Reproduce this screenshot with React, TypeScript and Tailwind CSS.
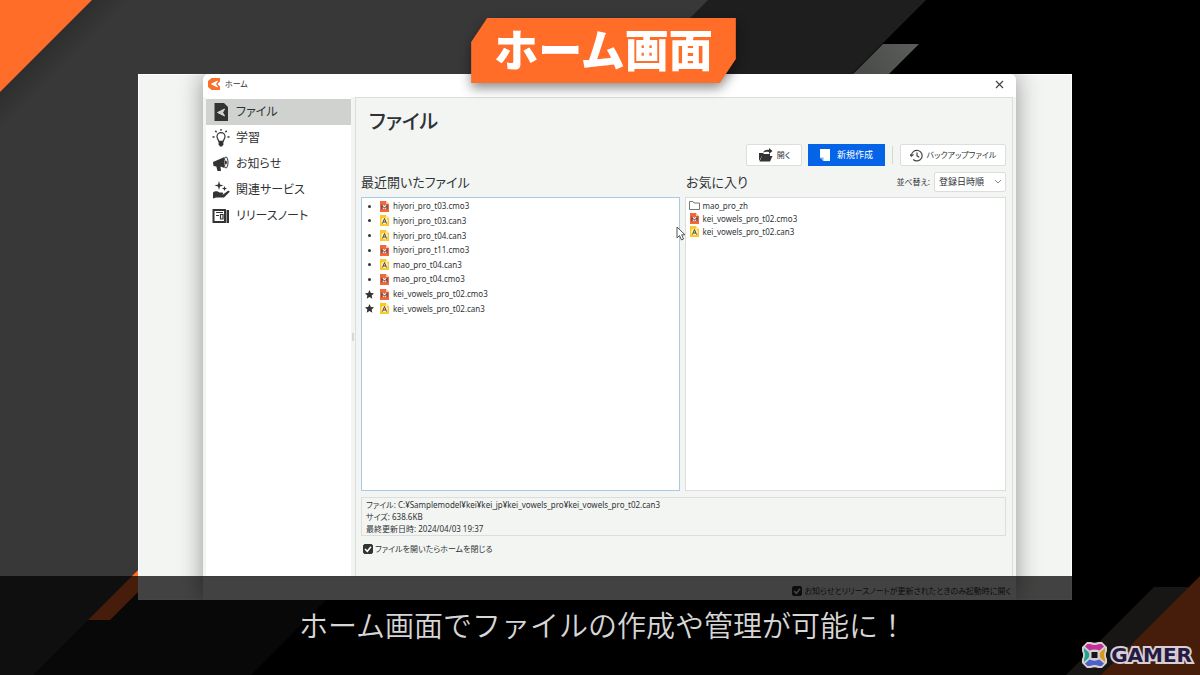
import { useState } from "react"
import type { ReactNode } from "react"

type FileKind = "cmo3" | "can3" | "folder"

type FileItem = {
    name: string
    kind: FileKind
    starred?: boolean
}

const recentFiles: FileItem[] = [
    { name: "hiyori_pro_t03.cmo3", kind: "cmo3" },
    { name: "hiyori_pro_t03.can3", kind: "can3" },
    { name: "hiyori_pro_t04.can3", kind: "can3" },
    { name: "hiyori_pro_t11.cmo3", kind: "cmo3" },
    { name: "mao_pro_t04.can3", kind: "can3" },
    { name: "mao_pro_t04.cmo3", kind: "cmo3" },
    { name: "kei_vowels_pro_t02.cmo3", kind: "cmo3", starred: true },
    { name: "kei_vowels_pro_t02.can3", kind: "can3", starred: true },
]

const favorites: FileItem[] = [
    { name: "mao_pro_zh", kind: "folder" },
    { name: "kei_vowels_pro_t02.cmo3", kind: "cmo3" },
    { name: "kei_vowels_pro_t02.can3", kind: "can3" },
]

const menu: { label: string; icon: ReactNode }[] = [
    {
        label: "ファイル",
        icon: (
            <>
                <path d="M2.500 0h9.500l4 4v14H2.500z" fill="#333" />
                <path d="M12.500 6 5.500 9.500l7 3.500-1.800-3.500z" fill="#d0d2d0" stroke="#d0d2d0" />
            </>
        ),
    },
    {
        label: "学習",
        icon: (
            <>
                <path
                    d="M6.800 12.300C6.500 10.600 5 9.800 5 7.600a4 4 0 0 1 8 0c0 2.200-1.500 3-1.800 4.700z"
                    fill="none"
                    stroke="#333"
                    strokeWidth="1.200"
                />
                <path d="M6.600 13h4.800v2.500L10 17.500H8L6.600 15.500z" fill="#333" />
                <path
                    d="M9 0v1.800M3.300 1.700l1.300 1.500M14.700 1.700l-1.300 1.500M.5 8h2M15.500 8h2"
                    stroke="#333"
                    strokeWidth="1.400"
                />
            </>
        ),
    },
    {
        label: "お知らせ",
        icon: (
            <>
                <path d="M1 7 12.500 2v11L8.500 11.500 9 16H5.500L4.300 11.500 1.500 11z" fill="#333" />
                <ellipse cx="14" cy="7.500" rx="2" ry="5.500" fill="#eee" stroke="#333" />
                <path d="M13 5.500a2 2 0 0 1 0 4z" fill="#333" />
            </>
        ),
    },
    {
        label: "関連サービス",
        icon: (
            <>
                <path
                    d="M7 0l1 3.500L11.500 4.500 8 5.500 7 9 6 5.500 2.500 4.500 6 3.500zM12.500 5l.7 1.800 1.800.7-1.800.7-.7 1.800-.7-1.800L10 7.500l1.800-.7z"
                    fill="#333"
                />
                <path
                    d="M1 11.500c3-2 4.500-1 6.500 0h3c1.500.8.500 2-.7 2h-2.500 3.700L16 9.800c1.800-.6 2 1 1 1.800L12 16.500H4L1 17.500z"
                    fill="#333"
                />
            </>
        ),
    },
    {
        label: "リリースノート",
        icon: (
            <>
                <path d="M1.500 3h11.500v12H1.500z" fill="none" stroke="#333" strokeWidth="2" />
                <path d="M4 5.500h7M4 8.500h3M8.500 7.500H11V12H8.500z" fill="none" stroke="#333" strokeWidth="1.200" />
                <path d="M14.500 3H17v13h-2.500z" fill="#333" />
            </>
        ),
    },
]

function Background() {
    return (
        <svg
            className="absolute inset-0 h-full w-full"
            viewBox="0 0 1200 675"
            preserveAspectRatio="xMidYMid slice"
            aria-hidden="true"
        >
            <defs>
                <linearGradient id="fold" gradientUnits="userSpaceOnUse" x1="46" y1="46" x2="66" y2="66">
                    <stop offset="0" stopColor="#2e2e2e" />
                    <stop offset="1" stopColor="#383838" />
                </linearGradient>
                <linearGradient id="steel" gradientUnits="userSpaceOnUse" x1="865" y1="73" x2="910" y2="44">
                    <stop offset="0" stopColor="#4a4c49" />
                    <stop offset="1" stopColor="#5a5c59" />
                </linearGradient>
            </defs>
            <path d="M0 0h1200v675H0z" fill="#000" />
            <path d="M0 0h926L251 675H0z" fill="#1e1e1e" />
            <path d="M0 0h708L33 675H0z" fill="url(#fold)" />
            <path d="M0 0h92L0 92z" fill="#ff6d29" />
            <path d="M883 44h36L819 144h-36z" fill="url(#steel)" />
            <path d="M208 500h22L110 620H88z" fill="#ff6d29" />
            <path d="M1154 587h46v88h-134z" fill="#565350" />
            <path d="M1200 576v99h-99z" fill="#ff6d29" />
        </svg>
    )
}

function FileIcon({ kind }: { kind: FileKind }) {
    if (kind === "folder") {
        return (
            <svg className="h-[11px] w-[11px] shrink-0" viewBox="0 0 11 11">
                <path d="M.5 9.500v-8H4l1 1.500h5.500v6.500z" fill="#fff" stroke="#777" />
            </svg>
        )
    }
    const isModel = kind === "cmo3"
    return (
        <svg className="h-[11px] w-[11px] shrink-0" viewBox="0 0 11 11">
            <path d="M1 0h6l3 3v8H1z" fill={isModel ? "#f2683c" : "#fbc926"} />
            <path d="M7 0l3 3H7z" fill="#fff" opacity=".6" />
            {isModel ? (
                <>
                    <path d="M3.500 3.500 5.500 5l2-1.500v5l-2-1.500-2 1.500z" fill="#fff" />
                    <path d="M3 3.500v5M8 3.500v5" stroke="#4a3b38" />
                    <path d="M3 5.500l2.500 1L8 5.500" fill="none" stroke="#4a3b38" />
                </>
            ) : (
                <>
                    <circle cx="5.500" cy="6" r="3.300" fill="#fff" opacity=".7" />
                    <path d="M3.500 8.500l2-5 2 5M4.300 7h2.400" fill="none" stroke="#4a4436" />
                </>
            )}
        </svg>
    )
}

function FileName({ item }: { item: FileItem }) {
    return (
        <button type="button" className="flex items-center gap-[3px] whitespace-nowrap">
            <FileIcon kind={item.kind} />
            {item.name}
        </button>
    )
}

function Check({ label }: { label: string }) {
    const [on, setOn] = useState(true)
    return (
        <label className="flex items-center gap-[2px] whitespace-nowrap text-[8px] leading-3">
            <span className="relative h-[10px] w-[10px]">
                <input
                    type="checkbox"
                    checked={on}
                    onChange={(e) => setOn(e.target.checked)}
                    className="block h-[10px] w-[10px] appearance-none rounded-[2px] border border-[#333] bg-white checked:bg-[#333]"
                />
                {on && (
                    <svg className="pointer-events-none absolute inset-0" viewBox="0 0 10 10">
                        <path d="M2 5l2.300 2.300L8 2.800" fill="none" stroke="#fff" strokeWidth="1.500" />
                    </svg>
                )}
            </span>
            {label}
        </label>
    )
}

function Sidebar() {
    const [active, setActive] = useState(0)
    return (
        <nav className="w-[145px] shrink-0 bg-white pt-[2px]">
            {menu.map((item, i) => (
                <button
                    key={item.label}
                    type="button"
                    onClick={() => setActive(i)}
                    className={`flex h-[26px] w-full items-center gap-[6px] pl-[6px] text-[12px] ${
                        i === active ? "bg-[#d0d2d0]" : ""
                    }`}
                >
                    <svg className="h-[18px] w-[18px]" viewBox="0 0 18 18">
                        {item.icon}
                    </svg>
                    {item.label}
                </button>
            ))}
        </nav>
    )
}

function Toolbar() {
    return (
        <div className="mt-[6px] flex h-[22px] items-stretch justify-end">
            <button
                type="button"
                className="flex w-14 items-center justify-center gap-1 rounded-[2px] border border-[#dcdedc] bg-white text-[8px]"
            >
                <svg className="h-[14px] w-[15px]" viewBox="0 0 15 14">
                    <path d="M1 13V5h4l1 1h6v2H4z" fill="#333" />
                    <path d="M4 8h10.500L12 13.500H1.500z" fill="#333" />
                    <path d="M5 4.500C6.500 2 9 1.500 11 2V0l3.500 3L11 6V4C9 3.500 7 3.500 5 4.500z" fill="#333" />
                </svg>
                開く
            </button>
            <button
                type="button"
                className="ml-[6px] flex w-[77px] items-center justify-center gap-[7px] bg-[#0563e8] text-[9px] text-white"
            >
                <svg className="h-3 w-[10px]" viewBox="0 0 10 12">
                    <path d="M0 0h10v12H3.500L0 8.500z" fill="#fff" />
                    <path d="M0 8.500h3.500V12z" fill="#7fb0f5" />
                </svg>
                新規作成
            </button>
            <div className="mx-[7px] my-[2px] w-px bg-[#d5d8d5]" />
            <button
                type="button"
                className="flex w-[106px] items-center justify-center gap-1 rounded-[2px] border border-[#dcdedc] bg-white text-[8px]"
            >
                <svg className="h-[13px] w-[13px]" viewBox="0 0 13 13" fill="none" stroke="#444" strokeWidth="1.200">
                    <path d="M1.500 6.500a5.300 5.300 0 1 1 1.700 4M7 3.500v3.300l2.300 1.400" />
                    <path d="M-.3 5.200l1.800 2 2-1.800" />
                </svg>
                バックアップファイル
            </button>
        </div>
    )
}

function HomeWindow() {
    return (
        <div className="ml-[65px] mr-14 flex flex-1 flex-col rounded-t-md bg-[#f3f5f3] shadow-[0_0_24px_rgba(0,0,0,0.4)]">
            <header className="flex h-[23px] items-center gap-[5px] rounded-t-md bg-white pb-[3px] pl-[5px] pr-[12px] text-[8px]">
                <svg className="h-3 w-3" viewBox="0 0 12 12">
                    <path d="M3.500 0H12v3.500L9.500 6l2.500 2.500V12H3.500L0 9V3z" fill="#f9702b" />
                    <path d="M9.500 3 3.500 6l6 3L7.500 6z" fill="#fff" stroke="#fff" />
                </svg>
                <span>ホーム</span>
                <button type="button" aria-label="閉じる" className="ml-auto">
                    <svg className="h-[9px] w-[9px]" viewBox="0 0 9 9">
                        <path d="M1 1l7 7M8 1 1 8" stroke="#444" strokeWidth="1.200" />
                    </svg>
                </button>
            </header>

            <div className="flex flex-1 px-[3px]">
                <Sidebar />
                <div className="flex w-1 flex-col items-center justify-center">
                    <span className="h-2 w-[2px] bg-[#d5d8d5]" />
                </div>

                <main className="flex min-w-0 flex-1 flex-col border border-b-0 border-[#dcdedc] pb-[21px] pl-[5px] pr-[6px] pt-2">
                    <h1 className="pl-2 text-[20px] font-medium leading-8">ファイル</h1>
                    <Toolbar />

                    <div className="mt-[6px] flex h-5 gap-[5px] whitespace-nowrap">
                        <h2 className="flex-1 text-[13px] leading-5">最近開いたファイル</h2>
                        <div className="flex flex-1 justify-between">
                            <h2 className="text-[13px] leading-5">お気に入り</h2>
                            <div className="flex items-center gap-1">
                                <label htmlFor="sort" className="text-[8px]">
                                    並べ替え:
                                </label>
                                <div className="relative">
                                    <select
                                        id="sort"
                                        className="block h-5 w-[72px] appearance-none rounded-[2px] border border-[#dcdedc] bg-white pl-1 text-[9px]"
                                    >
                                        <option>登録日時順</option>
                                    </select>
                                    <svg
                                        className="pointer-events-none absolute right-1 top-[7px] h-[6px] w-2"
                                        viewBox="0 0 8 6"
                                    >
                                        <path d="M1 1l3 3 3-3" fill="none" stroke="#888" />
                                    </svg>
                                </div>
                            </div>
                        </div>
                    </div>

                    <div className="mt-[5px] flex flex-1 gap-[5px] text-[8px]">
                        <div className="relative flex-1 border border-[#a9cbe8] bg-white">
                            <ul className="grid h-[118px] grid-rows-8 pt-px">
                                {recentFiles.map((item) => (
                                    <li key={item.name} className="flex items-center gap-[2px]">
                                        <span className="flex w-[15px] items-center justify-center">
                                            {item.starred ? (
                                                <svg className="h-[9px] w-[9px]" viewBox="0 0 10 10">
                                                    <path
                                                        d="M5 0l1.500 3.300 3.500.4-2.600 2.400.7 3.600L5 7.900 1.900 9.700l.7-3.600L0 3.700l3.500-.4z"
                                                        fill="#333"
                                                    />
                                                </svg>
                                            ) : (
                                                <span className="h-[3px] w-[3px] rounded-full bg-[#333]" />
                                            )}
                                        </span>
                                        <FileName item={item} />
                                    </li>
                                ))}
                            </ul>
                            {/* mouse pointer resting on the list edge */}
                            <svg className="absolute right-[-7px] top-[28px] h-4 w-[10px]" viewBox="0 0 10 16">
                                <path d="M1 1v11l2.500-2.500L5.500 14l2-1L5.700 8.800H9z" fill="#fff" stroke="#555" />
                            </svg>
                        </div>
                        <ul className="flex-1 border border-[#dcdedc] bg-white pl-[3px] pt-px">
                            {favorites.map((item) => (
                                <li key={item.name} className="flex h-[13px] items-center">
                                    <FileName item={item} />
                                </li>
                            ))}
                        </ul>
                    </div>

                    <div className="mt-[6px] border border-[#dcdedc] pl-1 pt-px text-[8px] leading-3">
                        <p>ファイル: C:¥Samplemodel¥kei¥kei_jp¥kei_vowels_pro¥kei_vowels_pro_t02.can3</p>
                        <p>サイズ: 638.6KB</p>
                        <p>最終更新日時: 2024/04/03 19:37</p>
                    </div>
                    <div className="mt-[7px] pl-[2px]">
                        <Check label="ファイルを開いたらホームを閉じる" />
                    </div>
                </main>
            </div>

            <footer className="flex h-6 items-center justify-end border-t border-[#dcdedc] pr-[5px] pt-1">
                <Check label="お知らせとリリースノートが更新されたときのみ起動時に開く" />
            </footer>
        </div>
    )
}

function GamerLogo() {
    return (
        <div className="absolute bottom-[6px] right-2 flex items-center gap-[3px]">
            <svg className="h-7 w-[27px]" viewBox="0 0 27 28">
                <path
                    d="M6 1h4c2 1 5 1 7 0h4l5 5v4c-1.500 2.500-1.500 5.500 0 8v4l-5 5h-4c-2-1-5-1-7 0H6l-5-5v-4c1.500-2.500 1.500-5.500 0-8V6z"
                    fill="#d9cfd0"
                />
                <path d="M6.500 3H9c3 1.300 6 1.300 9 0h2.500L23 5.500l-4.500 4c-3-1.500-7-1.500-10 0L4 5.500z" fill="#c2309a" />
                <path d="M3 7l4.500 4c1 2 1 4 0 6L3 21v-3c1.300-2.500 1.300-5.500 0-8z" fill="#1fa58c" />
                <path d="M24 7l-4.500 4c-1 2-1 4 0 6l4.500 4v-3c-1.300-2.500-1.300-5.500 0-8z" fill="#d59a1c" />
                <path d="M6.500 25H9c3-1.300 6-1.300 9 0h2.500l2.500-2.500-4.500-4c-3 1.500-7 1.500-10 0L4 22.500z" fill="#4b62c8" />
                <path d="M10.500 11h6v6h-6z" fill="#17151f" />
            </svg>
            <span className="font-['DejaVu_Sans',sans-serif] text-[20px] font-bold leading-7 text-[#251a45] [-webkit-text-stroke:4px_#d9cfd0] [paint-order:stroke_fill]">
                GAMER
            </span>
        </div>
    )
}

export default function App() {
    return (
        <div className="relative flex min-h-screen flex-col overflow-hidden bg-black pb-[75px] pl-[138px] pr-32 pt-[74px] font-['Noto_Sans','Noto_Sans_CJK_JP',sans-serif] text-[#2f3336]">
            <Background />

            <div className="relative flex flex-1 overflow-hidden bg-[#f3f5f3] shadow-[inset_0_0_0_1px_#fff] [font-feature-settings:'palt']">
                <HomeWindow />
            </div>

            {/* title badge */}
            <div className="absolute inset-x-0 top-[18px] flex justify-center pl-[7px] drop-shadow-[0_5px_6px_rgba(0,0,0,0.45)]">
                <div className="bg-[#ff6d29] px-[23px] text-[44px] font-black leading-[65px] text-white [clip-path:polygon(16px_0,100%_0,100%_calc(100%-24px),calc(100%-16px)_100%,0_100%,0_24px)]">
                    ホーム画面
                </div>
            </div>

            {/* subtitle band */}
            <div className="absolute inset-x-0 bottom-0 flex h-[99px] items-center justify-center bg-[rgba(2,0,0,0.73)] pl-[6px] text-[29px] font-[350] text-[#d6d6d6]">
                ホーム画面でファイルの作成や管理が可能に！
            </div>

            <GamerLogo />
        </div>
    )
}
